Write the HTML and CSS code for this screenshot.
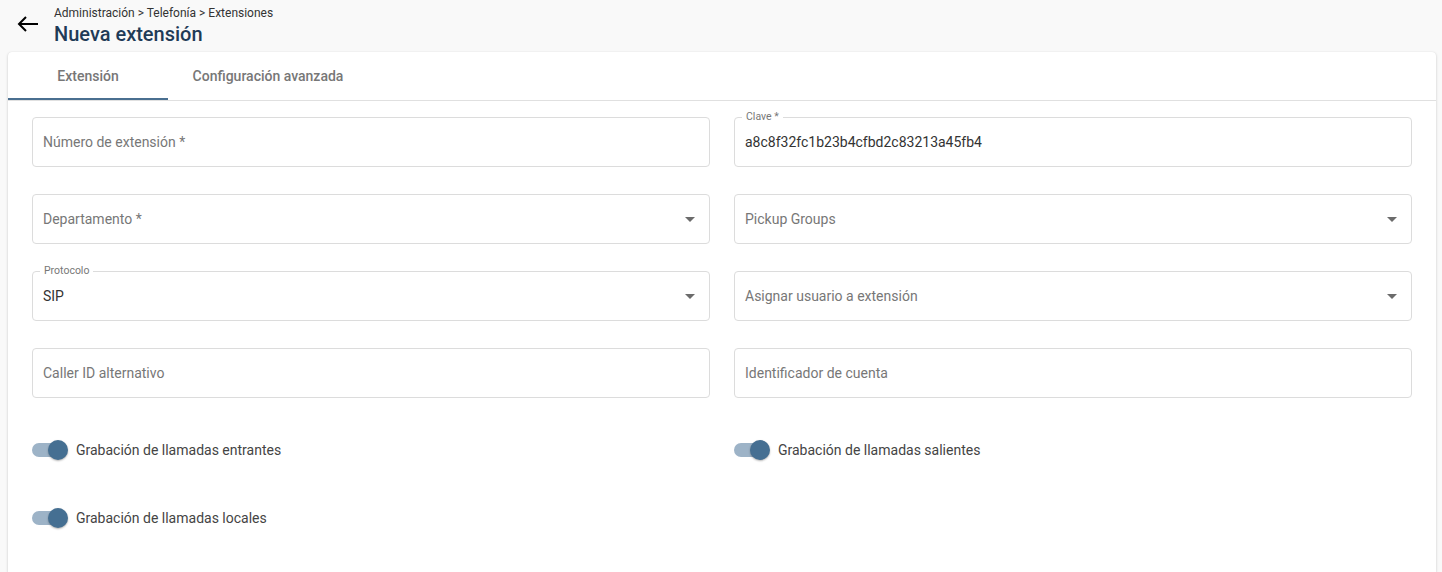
FILE: index.html
```html
<!DOCTYPE html>
<html lang="es">
<head>
  <meta charset="UTF-8">
  <meta name="viewport" content="width=device-width, initial-scale=1.0">
  <title>Nueva extensión</title>
  <link rel="stylesheet" href="styles.css">
</head>
<body>

  <header class="page-header">
    <button class="back-btn" aria-label="Volver">
      <svg width="22" height="16" viewBox="0 0 22 16">
        <path d="M21 8H2M9 1L2 8l7 7" fill="none" stroke="#000" stroke-width="2"/>
      </svg>
    </button>
    <div class="titles">
      <div class="crumbs">Administración &gt; Telefonía &gt; Extensiones</div>
      <h1>Nueva extensión</h1>
    </div>
  </header>

  <main class="card">
    <nav class="tabs">
      <div class="tab active">Extensión</div>
      <div class="tab">Configuración avanzada</div>
    </nav>

    <form class="form">
      <div class="fields">
        <div class="field">
          <span class="placeholder">Número de extensión *</span>
        </div>
        <div class="field filled">
          <span class="label">Clave *</span>
          <span class="value">a8c8f32fc1b23b4cfbd2c83213a45fb4</span>
        </div>

        <div class="field select">
          <span class="placeholder">Departamento *</span>
          <span class="caret"></span>
        </div>
        <div class="field select">
          <span class="placeholder">Pickup Groups</span>
          <span class="caret"></span>
        </div>

        <div class="field select filled">
          <span class="label">Protocolo</span>
          <span class="value">SIP</span>
          <span class="caret"></span>
        </div>
        <div class="field select">
          <span class="placeholder">Asignar usuario a extensión</span>
          <span class="caret"></span>
        </div>

        <div class="field">
          <span class="placeholder">Caller ID alternativo</span>
        </div>
        <div class="field">
          <span class="placeholder">Identificador de cuenta</span>
        </div>
      </div>

      <div class="switches">
        <label class="switch-row">
          <span class="switch"><span class="track"></span><span class="thumb"></span></span>
          Grabación de llamadas entrantes
        </label>
        <label class="switch-row">
          <span class="switch"><span class="track"></span><span class="thumb"></span></span>
          Grabación de llamadas salientes
        </label>
        <label class="switch-row">
          <span class="switch"><span class="track"></span><span class="thumb"></span></span>
          Grabación de llamadas locales
        </label>
      </div>
    </form>
  </main>

</body>
</html>
```

FILE: styles.css
```css
body {
  margin: 0;
  background-color: #f9f9f9;
  font-family: Roboto, "Liberation Sans", Arial, sans-serif;
  color: #333;
  height: 572px;
  overflow: hidden;
}

.page-header {
  height: 52px;
  display: flex;
  align-items: flex-start;
  padding: 6px 0 0 17px;
  box-sizing: border-box;
}

.back-btn {
  border: none;
  background: none;
  padding: 0;
  margin-top: 10px;
  width: 22px;
  height: 16px;
  cursor: pointer;
}

.back-btn svg {
  display: block;
}

.titles {
  margin-left: 15px;
}

.crumbs {
  font-size: 12px;
  line-height: 14px;
  color: #333;
}

.titles h1 {
  margin: 2px 0 0;
  font-size: 20px;
  line-height: 24px;
  font-weight: 500;
  color: #1f3b57;
}

.card {
  margin: 0 6px 0 8px;
  background: #fff;
  border-radius: 4px 4px 0 0;
  box-shadow: 0 1px 3px rgba(0, 0, 0, 0.18), 0 0 1px rgba(0, 0, 0, 0.1);
  min-height: 520px;
}

.tabs {
  display: flex;
  height: 48px;
  border-bottom: 1px solid #e0e0e0;
}

.tab {
  position: relative;
  width: 160px;
  display: flex;
  align-items: center;
  justify-content: center;
  font-size: 14px;
  font-weight: 500;
  color: #777;
  white-space: nowrap;
}

.tab:nth-child(2) {
  width: 200px;
}

.tab.active::after {
  content: "";
  position: absolute;
  left: 0;
  right: 0;
  bottom: 0;
  height: 2px;
  background: #4a6f90;
}

.form {
  padding: 16px 24px 0;
}

.fields {
  display: grid;
  grid-template-columns: 1fr 1fr;
  column-gap: 24px;
  row-gap: 27px;
}

.field {
  position: relative;
  height: 50px;
  box-sizing: border-box;
  border: 1px solid #dcdcdc;
  border-radius: 4px;
  display: flex;
  align-items: center;
  padding: 0 10px;
  font-size: 14px;
}

.placeholder {
  color: #777;
}

.value {
  color: #333;
}

.label {
  position: absolute;
  top: -7px;
  left: 7px;
  padding: 0 4px;
  background: #fff;
  font-size: 10.5px;
  line-height: 12px;
  color: #777;
}

.caret {
  position: absolute;
  right: 14px;
  top: 22px;
  width: 0;
  height: 0;
  border-left: 5px solid transparent;
  border-right: 5px solid transparent;
  border-top: 5px solid #6b6b6b;
}

.switches {
  display: grid;
  grid-template-columns: 1fr 1fr;
  column-gap: 24px;
  row-gap: 30px;
  margin-top: 33px;
}

.switch-row {
  height: 38px;
  display: flex;
  align-items: center;
  font-size: 14px;
  color: #444;
}

.switch {
  position: relative;
  width: 36px;
  height: 20px;
  margin-right: 8px;
  flex-shrink: 0;
}

.track {
  position: absolute;
  left: 0;
  top: 3px;
  width: 28px;
  height: 14px;
  border-radius: 7px;
  background: #9db3c7;
}

.thumb {
  position: absolute;
  left: 16px;
  top: 0;
  width: 20px;
  height: 20px;
  border-radius: 50%;
  background: #456f92;
  box-shadow: 0 1px 2px rgba(0, 0, 0, 0.3);
}
```
